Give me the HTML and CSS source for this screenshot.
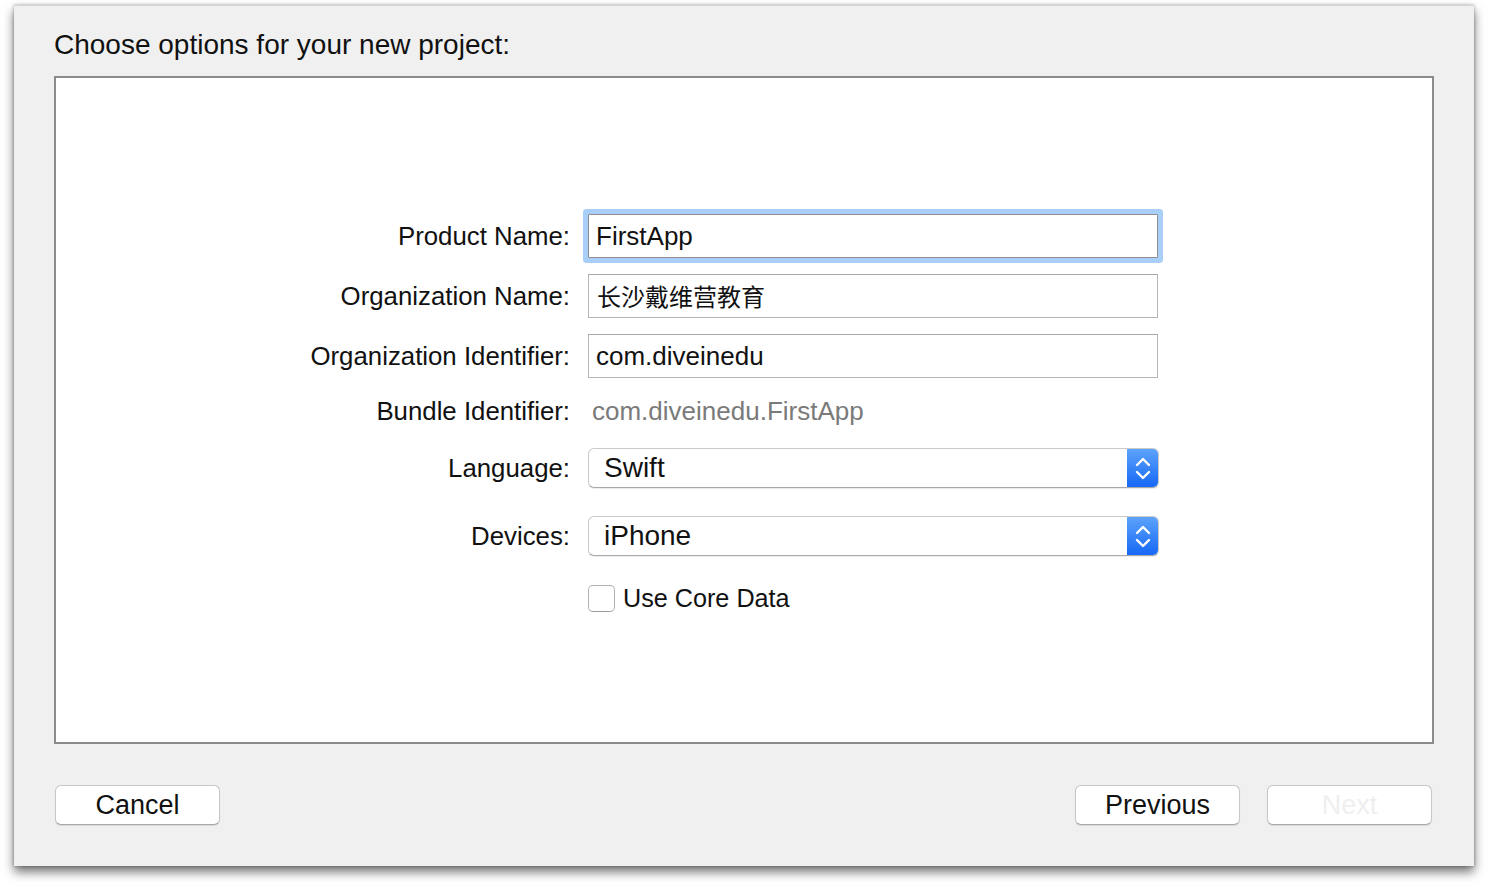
FILE: index.html
```html
<!DOCTYPE html>
<html>
<head>
<meta charset="utf-8">
<link rel="stylesheet" href="styles.css">
</head>
<body>
<div class="window">
  <div class="title">Choose options for your new project:</div>
  <div class="panel">
    <div class="row r1">
      <div class="label">Product Name:</div>
      <div class="field focused">FirstApp</div>
    </div>
    <div class="row r2">
      <div class="label">Organization Name:</div>
      <div class="field cjk">长沙戴维营教育</div>
    </div>
    <div class="row r3">
      <div class="label">Organization Identifier:</div>
      <div class="field">com.diveinedu</div>
    </div>
    <div class="row r4">
      <div class="label">Bundle Identifier:</div>
      <div class="static">com.diveinedu.FirstApp</div>
    </div>
    <div class="row r5">
      <div class="label">Language:</div>
      <div class="popup">
        <span class="popup-text">Swift</span>
        <span class="stepper"><svg width="32" height="40" viewBox="0 0 32 40"><path d="M10 17 L16 11 L22 17" fill="none" stroke="#fff" stroke-width="2.4" stroke-linecap="round" stroke-linejoin="round"/><path d="M10 24 L16 30 L22 24" fill="none" stroke="#fff" stroke-width="2.4" stroke-linecap="round" stroke-linejoin="round"/></svg></span>
      </div>
    </div>
    <div class="row r6">
      <div class="label">Devices:</div>
      <div class="popup">
        <span class="popup-text">iPhone</span>
        <span class="stepper"><svg width="32" height="40" viewBox="0 0 32 40"><path d="M10 17 L16 11 L22 17" fill="none" stroke="#fff" stroke-width="2.4" stroke-linecap="round" stroke-linejoin="round"/><path d="M10 24 L16 30 L22 24" fill="none" stroke="#fff" stroke-width="2.4" stroke-linecap="round" stroke-linejoin="round"/></svg></span>
      </div>
    </div>
    <div class="row r7">
      <div class="label"></div>
      <div class="check-wrap"><span class="checkbox"></span><span class="check-label">Use Core Data</span></div>
    </div>
  </div>
  <div class="footer">
    <div class="btn">Cancel</div>
    <div class="right-btns">
      <div class="btn">Previous</div>
      <div class="btn disabled">Next</div>
    </div>
  </div>
</div>
</body>
</html>
```

FILE: styles.css
```css
html, body {
  margin: 0;
  padding: 0;
  background: #ffffff;
  font-family: "Liberation Sans", Arial, "Noto Sans CJK SC", sans-serif;
  color: #111;
}
body {
  height: 888px;
  overflow: hidden;
}
.window {
  box-sizing: border-box;
  margin: 5px 0 0 14px;
  width: 1460px;
  height: 861px;
  background: #f0f0f0;
  border-top: 1px solid #d6d6d6;
  padding: 0 40px;
  display: flex;
  flex-direction: column;
  box-shadow: 0 6px 10px rgba(0,0,0,0.55), 0 0 3px rgba(0,0,0,0.3);
}
.title {
  margin-top: 24px;
  font-size: 28px;
  line-height: 30px;
  height: 30px;
  color: #111;
}
.panel {
  box-sizing: border-box;
  margin-top: 16px;
  height: 668px;
  background: #fff;
  border: 2px solid #8b8b8b;
  padding-top: 136px;
}
.row {
  display: flex;
  align-items: center;
}
.label {
  width: 514px;
  flex: none;
  text-align: right;
  font-size: 25.8px;
  margin-right: 18px;
  color: #111;
}
.r1, .r2, .r3 { height: 44px; }
.r2, .r3 { margin-top: 16px; }
.r4 { margin-top: 16px; height: 34px; }
.r5 { margin-top: 20px; height: 40px; }
.r6 { margin-top: 28px; height: 40px; }
.r7 { margin-top: 28px; height: 28px; }
.field {
  box-sizing: border-box;
  width: 570px;
  height: 44px;
  border: 1px solid #b5b5b5;
  border-top-color: #a8a8a8;
  padding-left: 7px;
  font-size: 26px;
  line-height: 42px;
  color: #111;
  background: #fff;
}
.cjk {
  font-family: "Noto Sans CJK SC", sans-serif;
  font-size: 24px;
  padding-left: 8px;
}
.focused {
  border-radius: 1px;
  border-color: #8e8e8e;
  box-shadow: 0 0 0 5px #a9cff8;
}
.static {
  font-size: 26px;
  color: #7a7a7a;
  padding-left: 4px;
}
.popup {
  box-sizing: border-box;
  width: 571px;
  height: 40px;
  border: 1px solid #c9c9c9;
  border-bottom-color: #a9a9a9;
  border-radius: 6px;
  display: flex;
  align-items: center;
  background: #fff;
  box-shadow: 0 1px 1px rgba(0,0,0,0.08);
  overflow: hidden;
}
.popup-text {
  flex: 1;
  font-size: 28px;
  padding-left: 15px;
  color: #111;
}
.stepper {
  width: 32px;
  height: 40px;
  margin: -1px -1px -1px 0;
  background: linear-gradient(#5ea5fb, #1466f5);
  display: flex;
}
.check-wrap {
  display: flex;
  align-items: center;
}
.checkbox {
  box-sizing: border-box;
  width: 27px;
  height: 27px;
  border: 1px solid #b2b2b2;
  border-bottom-color: #9c9c9c;
  border-radius: 5px;
  background: #fff;
  margin-right: 8px;
}
.check-label {
  font-size: 25.2px;
  color: #111;
}
.footer {
  margin-top: 41px;
  display: flex;
  justify-content: space-between;
  padding-left: 1px;
  padding-right: 2px;
}
.right-btns {
  display: flex;
  gap: 27px;
}
.btn {
  box-sizing: border-box;
  width: 165px;
  height: 40px;
  background: #fff;
  border: 1px solid #c6c6c6;
  border-bottom-color: #a8a8a8;
  border-radius: 6px;
  text-align: center;
  font-size: 27px;
  line-height: 38px;
  color: #111;
  box-shadow: 0 1px 1px rgba(0,0,0,0.1);
}
.btn.disabled {
  color: #efefef;
}
```
